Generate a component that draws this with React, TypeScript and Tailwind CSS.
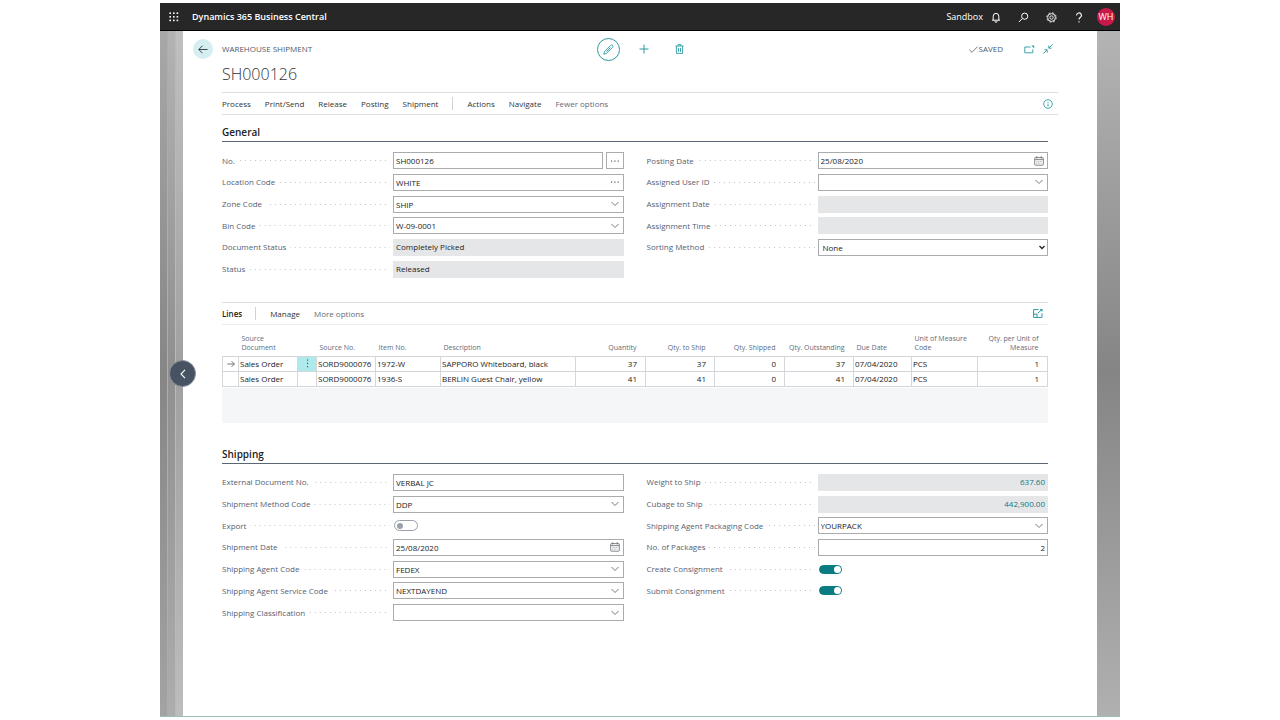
import { useId, type ReactNode } from "react";

const BOX = "h-[17px] w-full min-w-0 border border-[#a9abad] bg-white px-[2px] text-[8px] leading-[15px] text-[#222] outline-none";

function ChevronDown() {
  return (
    <svg width="8" height="6" viewBox="0 0 8 6" fill="none" stroke="#666a70" strokeWidth="0.9">
      <path d="M0.5 1 L4 4.5 L7.5 1" />
    </svg>
  );
}

function CalendarIcon() {
  return (
    <svg width="10" height="10" viewBox="0 0 10 10" fill="none" stroke="#66696e" strokeWidth="0.8">
      <rect x="0.7" y="1.6" width="8.6" height="7.6" rx="0.6" />
      <path d="M0.7 3.6 H9.3" />
      <path d="M2.8 0.4 V2.4 M7.2 0.4 V2.4" strokeWidth="1" />
      <path d="M2.6 5.4 H7.9 M2.1 7.2 H7.4" stroke="#8f9297" strokeDasharray="1 0.6" />
    </svg>
  );
}

function Dots() {
  return (
    <svg width="10" height="4" viewBox="0 0 10 4" fill="#55585d">
      <rect x="1" y="1.5" width="1.2" height="1.2" />
      <rect x="4.3" y="1.5" width="1.2" height="1.2" />
      <rect x="7.6" y="1.5" width="1.2" height="1.2" />
    </svg>
  );
}

function Row({ id, label, children }: { id: string; label: string; children: ReactNode }) {
  return (
    <div className="flex items-center">
      <div className="flex w-[171px] shrink-0 items-center">
        <label htmlFor={id} className="whitespace-nowrap text-[#566173]">
          {label}
        </label>
        <span className="mr-[3px] ml-1 h-px flex-1 bg-[linear-gradient(to_right,#bfc4ca_1px,transparent_1px)] bg-[length:5px_1px] bg-right" />
      </div>
      <div className="flex min-w-0 flex-1 items-center">{children}</div>
    </div>
  );
}

type Kind = "plain" | "assist" | "more" | "drop" | "date" | "readonly" | "total" | "number";

function Field({ label, value = "", kind = "plain" }: { label: string; value?: string; kind?: Kind }) {
  const id = useId();
  if (kind === "readonly" || kind === "total") {
    return (
      <Row id={id} label={label}>
        <input
          id={id}
          readOnly
          defaultValue={value}
          className={
            kind === "total"
              ? "h-[17px] w-full min-w-0 bg-[#e5e6e8] px-[3px] pb-px text-right text-[8px] text-[#0f7a81] outline-none"
              : "h-[17px] w-full min-w-0 bg-[#e5e6e8] px-[3px] pb-px text-[8px] text-[#222] outline-none"
          }
        />
      </Row>
    );
  }
  if (kind === "assist") {
    return (
      <Row id={id} label={label}>
        <input id={id} defaultValue={value} className={BOX} />
        <button aria-label={`${label} options`} className="ml-[3px] flex h-[17px] w-[18px] shrink-0 items-center justify-center border border-[#a9abad] bg-white">
          <Dots />
        </button>
      </Row>
    );
  }
  const hasButton = kind === "more" || kind === "drop" || kind === "date";
  return (
    <Row id={id} label={label}>
      {hasButton ? (
        <div className="flex h-[17px] w-full items-center border border-[#a9abad] bg-white">
          <input id={id} defaultValue={value} className="h-full min-w-0 flex-1 bg-transparent px-[2px] text-[8px] text-[#222] outline-none" />
          <button aria-label={`Choose ${label}`} className="flex h-full w-[16px] shrink-0 items-center justify-center">
            {kind === "more" && <Dots />}
            {kind === "drop" && <ChevronDown />}
            {kind === "date" && <CalendarIcon />}
          </button>
        </div>
      ) : (
        <input id={id} defaultValue={value} className={kind === "number" ? `${BOX} text-right` : BOX} />
      )}
    </Row>
  );
}

function SelectField({ label, options }: { label: string; options: string[] }) {
  const id = useId();
  return (
    <Row id={id} label={label}>
      <div className="relative w-full">
        <select id={id} className="block h-[17px] w-full appearance-none border border-[#a9abad] bg-white px-[4px] text-[8px] leading-[15px] text-[#222] outline-none">
          {options.map((o) => (
            <option key={o}>{o}</option>
          ))}
        </select>
        <svg className="pointer-events-none absolute top-[6px] right-[3px]" width="6" height="5" viewBox="0 0 6 5" fill="none" stroke="#222" strokeWidth="1.3">
          <path d="M0.5 1 L3 3.5 L5.5 1" />
        </svg>
      </div>
    </Row>
  );
}

function Toggle({ label, on = false }: { label: string; on?: boolean }) {
  const id = useId();
  return (
    <Row id={id} label={label}>
      <input
        id={id}
        type="checkbox"
        role="switch"
        defaultChecked={on}
        className="ml-px flex h-[11px] w-[24px] appearance-none items-center rounded-full border border-[#9aa1ab] bg-white px-[2px] before:size-[6px] before:rounded-full before:bg-[#9aa1ab] checked:h-[9px] checked:w-[23px] checked:justify-end checked:border-[#0b7c84] checked:bg-[#0b7c84] checked:px-0 checked:before:size-[7px] checked:before:bg-white"
      />
    </Row>
  );
}

type Align = "left" | "right";
const columns: { title: string; width: number; align: Align }[] = [
  { title: "", width: 16, align: "left" },
  { title: "Source Document", width: 59, align: "left" },
  { title: "", width: 19, align: "left" },
  { title: "Source No.", width: 59, align: "left" },
  { title: "Item No.", width: 65, align: "left" },
  { title: "Description", width: 135, align: "left" },
  { title: "Quantity", width: 70, align: "right" },
  { title: "Qty. to Ship", width: 69, align: "right" },
  { title: "Qty. Shipped", width: 70, align: "right" },
  { title: "Qty. Outstanding", width: 69, align: "right" },
  { title: "Due Date", width: 58, align: "left" },
  { title: "Unit of Measure Code", width: 66, align: "left" },
  { title: "Qty. per Unit of Measure", width: 70, align: "right" },
];

const lines = [
  ["", "Sales Order", "", "SORD9000076", "1972-W", "SAPPORO Whiteboard, black", "37", "37", "0", "37", "07/04/2020", "PCS", "1"],
  ["", "Sales Order", "", "SORD9000076", "1936-S", "BERLIN Guest Chair, yellow", "41", "41", "0", "41", "07/04/2020", "PCS", "1"],
];

function LinesTable() {
  return (
    <table className="w-full table-fixed border-collapse text-[8px]">
      <colgroup>
        {columns.map((c, i) => (
          <col key={i} style={{ width: c.width }} />
        ))}
      </colgroup>
      <thead>
        <tr className="h-[31px] align-bottom">
          {columns.map((c, i) => (
            <th
              key={i}
              scope="col"
              className={
                c.align === "right"
                  ? "pr-[9px] pb-[4px] text-right text-[7px] leading-[9px] font-normal text-[#616b7b]"
                  : "pb-[4px] pl-[3px] text-left text-[7px] leading-[9px] font-normal text-[#616b7b]"
              }
            >
              {c.title}
            </th>
          ))}
        </tr>
      </thead>
      <tbody>
        {lines.map((cells, r) => (
          <tr key={r} className="h-[15px]">
            {cells.map((cell, i) => {
              if (i === 0) {
                return (
                  <td key={i} className="border border-[#d3d6da] p-0">
                    {r === 0 && (
                      <svg className="mx-auto block" width="8" height="8" viewBox="0 0 8 8" fill="none" stroke="#555" strokeWidth="0.8">
                        <path d="M0.3 4 H7.4 M4.6 1.2 L7.4 4 L4.6 6.8" />
                      </svg>
                    )}
                  </td>
                );
              }
              if (i === 2) {
                return (
                  <td key={i} className={r === 0 ? "border border-[#d3d6da] bg-[#aee9ec] p-0" : "border border-[#d3d6da] p-0"}>
                    {r === 0 && (
                      <button aria-label="Row menu" className="flex h-[13px] w-full items-center justify-center">
                        <svg width="3" height="9" viewBox="0 0 3 9" fill="#44505c">
                          <rect x="1" y="0.5" width="1.1" height="1.2" />
                          <rect x="1" y="3.8" width="1.1" height="1.2" />
                          <rect x="1" y="7.1" width="1.1" height="1.2" />
                        </svg>
                      </button>
                    )}
                  </td>
                );
              }
              return (
                <td
                  key={i}
                  className={
                    columns[i].align === "right"
                      ? "border border-[#d3d6da] py-0 pr-[8px] pl-0 text-right leading-[13px] whitespace-nowrap text-[#222]"
                      : "border border-[#d3d6da] py-0 pr-0 pl-px text-left leading-[13px] whitespace-nowrap text-[#222]"
                  }
                >
                  {cell}
                </td>
              );
            })}
          </tr>
        ))}
      </tbody>
    </table>
  );
}

function TopBar() {
  return (
    <header className="flex h-[28px] items-center border-b border-black bg-[#272727] pt-px pr-[5px] pl-[9px] text-white">
      <button aria-label="Apps" className="flex size-[10px] items-center justify-center">
        <svg width="10" height="10" viewBox="0 0 10 10" fill="#fff">
          {[0, 1, 2].map((y) =>
            [0, 1, 2].map((x) => <rect key={`${x}${y}`} x={0.4 + x * 3.6} y={0.4 + y * 3.6} width="1.6" height="1.6" />),
          )}
        </svg>
      </button>
      <h1 className="ml-[13px] text-[9px] font-semibold">Dynamics 365 Business Central</h1>
      <span className="ml-auto text-[9px]">Sandbox</span>
      <button aria-label="Notifications" className="ml-[8px]">
        <svg width="10" height="11" viewBox="0 0 10 11" fill="none" stroke="#fff" strokeWidth="1">
          <path d="M2.2 8 V4.2 A2.8 2.8 0 0 1 7.8 4.2 V8 M1 8.2 H9" />
          <path d="M3.9 9.2 A1.1 1.1 0 0 0 6.1 9.2" />
        </svg>
      </button>
      <button aria-label="Search" className="ml-[17px]">
        <svg width="11" height="11" viewBox="0 0 11 11" fill="none" stroke="#fff" strokeWidth="1">
          <circle cx="6.7" cy="4.2" r="3.1" />
          <path d="M4.4 6.5 L0.8 10.1" />
        </svg>
      </button>
      <button aria-label="Settings" className="ml-[17px]">
        <svg width="11" height="11" viewBox="0 0 11 11" fill="none" stroke="#fff">
          <circle cx="5.5" cy="5.5" r="3.9" strokeWidth="0.9" />
          <circle cx="5.5" cy="5.5" r="4.7" strokeWidth="0.9" strokeDasharray="1.85 1.84" />
          <circle cx="5.5" cy="5.5" r="1.7" strokeWidth="0.9" />
        </svg>
      </button>
      <button aria-label="Help" className="ml-[17px]">
        <svg width="10" height="11" viewBox="0 0 10 11" fill="none" stroke="#fff" strokeWidth="1.1">
          <path d="M2.6 3.4 A2.4 2.4 0 1 1 6.2 5.4 C5.2 6 5 6.4 5 7.6" />
          <path d="M5 9.2 V10.4" />
        </svg>
      </button>
      <button className="ml-[13px] flex size-[18px] items-center justify-center rounded-full bg-[#c9184a] text-[9px]">WH</button>
    </header>
  );
}

function PageHeader() {
  return (
    <div className="flex h-[36px] items-center pr-[44px] pl-[10px] text-[#2a9aa1]">
      <button aria-label="Back" className="flex size-[20px] items-center justify-center rounded-full bg-[#d5eef1]">
        <svg width="10" height="9" viewBox="0 0 10 9" fill="none" stroke="#333" strokeWidth="0.9">
          <path d="M9.6 4.5 H0.8 M4.4 0.8 L0.8 4.5 L4.4 8.2" />
        </svg>
      </button>
      <span className="ml-[9px] text-[8px] text-[#4d5a6d]">WAREHOUSE SHIPMENT</span>
      <div className="mx-auto flex items-center">
        <button aria-label="Edit" className="flex size-[23px] items-center justify-center rounded-full border border-[#2a9aa1]">
          <svg width="11" height="11" viewBox="0 0 11 11" fill="none" stroke="currentColor" strokeWidth="0.9">
            <path d="M0.8 10.2 L1.6 7.6 L7.6 1.4 A1.2 1.2 0 0 1 9.6 3.4 L3.4 9.4 Z M3.4 7.6 L7.4 3.6" />
          </svg>
        </button>
        <button aria-label="New" className="ml-[19px]">
          <svg width="10" height="10" viewBox="0 0 10 10" fill="none" stroke="currentColor" strokeWidth="1">
            <path d="M5 0.5 V9.5 M0.5 5 H9.5" />
          </svg>
        </button>
        <button aria-label="Delete" className="ml-[26px]">
          <svg width="9" height="10" viewBox="0 0 9 10" fill="none" stroke="currentColor" strokeWidth="0.9">
            <path d="M0.4 2 H8.6 M3 1.8 V0.6 H6 V1.8 M1.4 2.2 V9.4 H7.6 V2.2 M3.5 3.8 V7.8 M5.5 3.8 V7.8" />
          </svg>
        </button>
      </div>
      <span className="flex items-center text-[8px] text-[#4d5a6d]">
        <svg className="mr-px" width="9" height="7" viewBox="0 0 9 7" fill="none" stroke="currentColor" strokeWidth="0.8">
          <path d="M0.4 3.8 L3 6.3 L8.6 0.6" />
        </svg>
        SAVED
      </span>
      <button aria-label="Open in new window" className="ml-[21px]">
        <svg width="11" height="9" viewBox="0 0 11 9" fill="none" stroke="currentColor" strokeWidth="0.9">
          <path d="M6.6 2 H0.8 V7.8 H8.8 V4.4" />
          <path d="M7.4 0.6 H10.2 V3.4 Z" fill="currentColor" stroke="none" />
        </svg>
      </button>
      <button aria-label="Collapse" className="ml-[8px]">
        <svg width="10" height="10" viewBox="0 0 10 10" fill="none" stroke="currentColor" strokeWidth="0.9">
          <path d="M9.6 0.4 L6 4 M5.8 1.4 V4.2 H8.6 M0.4 9.6 L4 6 M1.4 5.8 H4.2 V8.6" />
        </svg>
      </button>
    </div>
  );
}

function SectionTitle({ children }: { children: ReactNode }) {
  return <h3 className="border-b border-[#5b6675] pb-[2px] text-[10px] leading-[14px] font-semibold text-[#222]">{children}</h3>;
}

export default function App() {
  return (
    <div className="flex min-h-screen flex-col bg-white py-[3px] font-['Open_Sans','Noto_Sans',sans-serif] text-[8px] leading-[12px]">
      <div className="mx-auto flex w-3/4 flex-1 flex-col border-b border-[#9dbdb7]">
        <TopBar />
        <div className="relative flex flex-1">
          <div className="flex w-[23px] shrink-0">
            <div className="w-[7px] bg-linear-to-b from-[#a8a8a8] via-[#868686] to-[#a3a3a3]" />
            <div className="w-[8px] border-l border-[#adadad] bg-linear-to-b from-[#b3b3b3] via-[#8f8f8f] to-[#adadad]" />
            <div className="flex-1 border-l border-[#b9b9b9] bg-linear-to-b from-[#c0c0c0] via-[#a0a0a0] to-[#bdbdbd]" />
          </div>
          <button aria-label="Previous record" className="absolute top-[329px] left-[9px] flex size-[27px] items-center justify-center rounded-full border border-[#8b919b] bg-[#475263]">
            <svg width="6" height="10" viewBox="0 0 6 10" fill="none" stroke="#fff" strokeWidth="1.1">
              <path d="M5 0.8 L1 5 L5 9.2" />
            </svg>
          </button>

          <main className="min-w-0 flex-1 bg-white">
            <PageHeader />
            <div className="pl-[39px]">
              <h2 className="text-[16px] leading-[14px] font-light text-[#333]">SH000126</h2>

              <nav className="mt-[11px] mr-[39px] flex h-[23px] items-center border-y border-[#dedfe1] text-[#333]">
                <div className="flex items-center gap-[14px]">
                  <button>Process</button>
                  <button>Print/Send</button>
                  <button>Release</button>
                  <button>Posting</button>
                  <button>Shipment</button>
                </div>
                <span className="mx-[14px] h-[13px] w-px bg-[#d0d2d5]" />
                <div className="flex items-center gap-[14px]">
                  <button>Actions</button>
                  <button>Navigate</button>
                  <button className="text-[#616b7b]">Fewer options</button>
                </div>
                <button aria-label="Information" className="mr-[5px] ml-auto text-[#2a9aa1]">
                  <svg width="10" height="10" viewBox="0 0 10 10" fill="none" stroke="currentColor" strokeWidth="0.9">
                    <circle cx="5" cy="5" r="4.3" />
                    <path d="M5 4.4 V7.4 M5 2.6 V3.5" />
                  </svg>
                </button>
              </nav>

              <div className="mr-[49px]">
                <section className="mt-[10px]">
                  <SectionTitle>General</SectionTitle>
                  <div className="mt-[8px] grid min-h-[130px] grid-cols-2 gap-x-[23px]">
                    <div className="grid grid-rows-6">
                      <Field label="No." value="SH000126" kind="assist" />
                      <Field label="Location Code" value="WHITE" kind="more" />
                      <Field label="Zone Code" value="SHIP" kind="drop" />
                      <Field label="Bin Code" value="W-09-0001" kind="drop" />
                      <Field label="Document Status" value="Completely Picked" kind="readonly" />
                      <Field label="Status" value="Released" kind="readonly" />
                    </div>
                    <div className="grid grid-rows-6">
                      <Field label="Posting Date" value="25/08/2020" kind="date" />
                      <Field label="Assigned User ID" kind="drop" />
                      <Field label="Assignment Date" kind="readonly" />
                      <Field label="Assignment Time" kind="readonly" />
                      <SelectField label="Sorting Method" options={["None", "Item", "Document", "Due Date"]} />
                    </div>
                  </div>
                </section>

                <section className="mt-[22px]">
                  <div className="flex h-[23px] items-center border-y border-t-[#dedfe1] border-b-[#ececee]">
                    <h3 className="font-semibold text-[#222]">Lines</h3>
                    <span className="mr-[14px] ml-[13px] h-[13px] w-px bg-[#d0d2d5]" />
                    <button className="text-[#333]">Manage</button>
                    <button className="ml-[14px] text-[#616b7b]">More options</button>
                    <button aria-label="Expand lines" className="mr-[5px] ml-auto text-[#2a9aa1]">
                      <svg width="10" height="9" viewBox="0 0 10 9" fill="none" stroke="currentColor" strokeWidth="1">
                        <path d="M5.5 0.6 H0.6 V8.4 H9 V4.4 M0.6 5.2 H4 V8.4 M4.8 4.2 L8.4 1" />
                        <path d="M6.6 0.1 H9.5 V3 Z" fill="currentColor" stroke="none" />
                      </svg>
                    </button>
                  </div>
                  <LinesTable />
                  <div className="mt-px h-[35px] bg-[#f5f6f8]" />
                </section>

                <section className="mt-[24px]">
                  <SectionTitle>Shipping</SectionTitle>
                  <div className="mt-[8px] grid min-h-[152px] grid-cols-2 gap-x-[23px]">
                    <div className="grid grid-rows-7">
                      <Field label="External Document No." value="VERBAL JC" />
                      <Field label="Shipment Method Code" value="DDP" kind="drop" />
                      <Toggle label="Export" />
                      <Field label="Shipment Date" value="25/08/2020" kind="date" />
                      <Field label="Shipping Agent Code" value="FEDEX" kind="drop" />
                      <Field label="Shipping Agent Service Code" value="NEXTDAYEND" kind="drop" />
                      <Field label="Shipping Classification" kind="drop" />
                    </div>
                    <div className="grid grid-rows-7">
                      <Field label="Weight to Ship" value="637.60" kind="total" />
                      <Field label="Cubage to Ship" value="442,900.00" kind="total" />
                      <Field label="Shipping Agent Packaging Code" value="YOURPACK" kind="drop" />
                      <Field label="No. of Packages" value="2" kind="number" />
                      <Toggle label="Create Consignment" on />
                      <Toggle label="Submit Consignment" on />
                    </div>
                  </div>
                </section>
              </div>
            </div>
          </main>

          <div className="w-[23px] shrink-0 bg-linear-to-b from-[#b4b4b4] via-[#858585] to-[#b0b0b0]" />
        </div>
      </div>
    </div>
  );
}
